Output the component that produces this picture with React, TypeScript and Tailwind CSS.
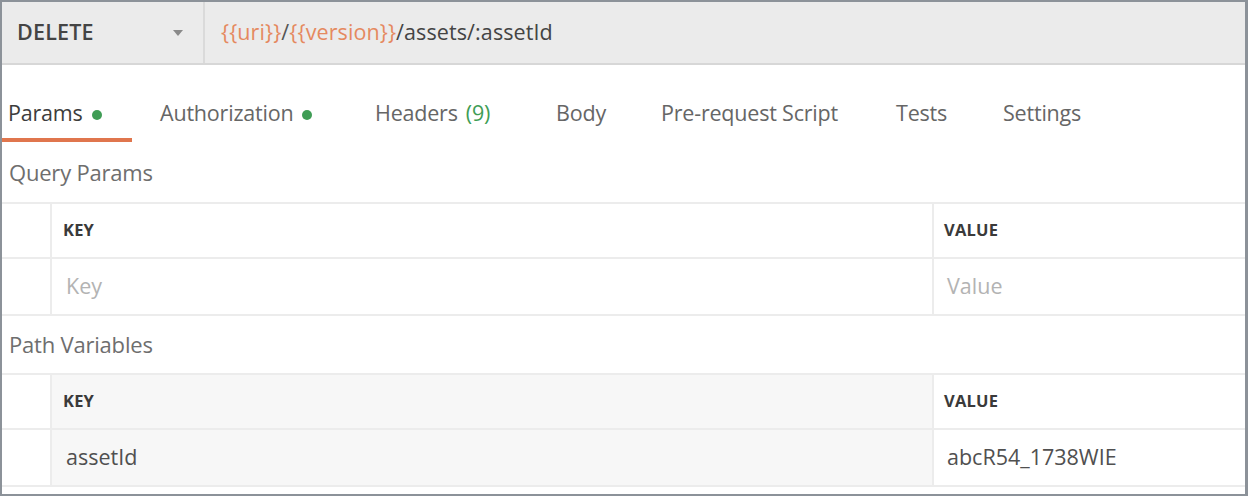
import React from "react";

const font = { fontFamily: '"Open Sans", "Noto Sans", sans-serif' };

function Dot() {
  return <span className="inline-block w-[10px] h-[10px] rounded-full bg-[#3f9d55] ml-[9px] mt-[3px]" />;
}

function Table({ rowKey, rowValue, placeholder, shaded }: { rowKey: string; rowValue: string; placeholder?: boolean; shaded?: boolean }) {
  const keyBg = shaded ? "bg-[#f7f7f7]" : "bg-white";
  const txt = placeholder ? "text-[#b3b3b3]" : "text-[#505050]";
  return (
    <div className="border-t-2 border-b-2 border-[#ececec] shrink-0">
      <div className="flex h-[55px] border-b-2 border-[#ececec]">
        <div className="w-[50px] border-r-2 border-[#ececec] bg-white" />
        <div className={`flex-1 flex items-center pl-[11px] border-r-2 border-[#ececec] ${keyBg}`}>
          <span className="text-[16.5px] font-bold text-[#3a3a3a] tracking-[0.2px]">KEY</span>
        </div>
        <div className="w-[311px] flex items-center pl-[10px] bg-white">
          <span className="text-[16.5px] font-bold text-[#3a3a3a] tracking-[0.2px]">VALUE</span>
        </div>
      </div>
      <div className="flex h-[55px]">
        <div className="w-[50px] border-r-2 border-[#ececec] bg-white" />
        <div className={`flex-1 flex items-center pl-[14px] border-r-2 border-[#ececec] ${keyBg}`}>
          <span className={`text-[21.5px] ${txt}`}>{rowKey}</span>
        </div>
        <div className="w-[311px] flex items-center pl-[13px] bg-white">
          <span className={`text-[21.5px] ${txt}`}>{rowValue}</span>
        </div>
      </div>
    </div>
  );
}

export default function App() {
  return (
    <div style={font} className="w-[1248px] h-[496px] bg-white border-t-[2px] border-l-[2px] border-r-[3px] border-b-[2px] border-[#8c9299] flex flex-col overflow-hidden">
      {/* top bar */}
      <div className="h-[63px] bg-[#ebebeb] border-b-2 border-[#d7d7d7] flex shrink-0">
        <div className="w-[203px] border-r-2 border-[#dadada] flex items-center justify-between pl-[15px] pr-[19px]">
          <span className="text-[21.5px] font-semibold text-[#444] tracking-[0.2px]">DELETE</span>
          <svg width="12" height="8" viewBox="0 0 12 8"><path d="M1 1 L11 1 L6 7 Z" fill="#8a8a8a" /></svg>
        </div>
        <div className="flex items-center pl-[16px] text-[21.5px] tracking-[0.1px]">
          <span className="text-[#e5895f]">{"{{uri}}"}</span>
          <span className="text-[#555]">/</span>
          <span className="text-[#e5895f]">{"{{version}}"}</span>
          <span className="text-[#444]">/assets/:assetId</span>
        </div>
      </div>
      {/* tabs */}
      <div className="h-[78px] flex shrink-0 text-[21.5px] text-[#666] tracking-[-0.2px]">
        <div className="relative w-[130px] flex items-center pl-[6px] h-full pt-[19px]">
          <span className="text-[#3c3c3c]">Params</span>
          <Dot />
          <div className="absolute left-[-2px] w-[132px] bottom-[1px] h-[4px] bg-[#e0764d]" />
        </div>
        <div className="w-[215px] flex items-center pl-[28px] h-full pt-[19px]">
          <span>Authorization</span>
          <Dot />
        </div>
        <div className="w-[181px] flex items-center pl-[28px] h-full pt-[19px]">
          <span>Headers</span>
          <span className="ml-[8px] text-[#3f9d55]">(9)</span>
        </div>
        <div className="w-[106px] flex items-center pl-[28px] h-full pt-[19px]">Body</div>
        <div className="w-[235px] flex items-center pl-[27px] h-full pt-[19px]">Pre-request Script</div>
        <div className="w-[106px] flex items-center pl-[27px] h-full pt-[19px]">Tests</div>
        <div className="flex items-center pl-[28px] h-full pt-[19px]">Settings</div>
      </div>
      {/* query params */}
      <div className="h-[59px] flex items-center pl-[7px] shrink-0">
        <span className="text-[22px] text-[#6e6e6e] tracking-[-0.2px]">Query Params</span>
      </div>
      <Table rowKey="Key" rowValue="Value" placeholder />
      <div className="h-[57px] flex items-center pl-[7px] shrink-0">
        <span className="text-[22px] text-[#6e6e6e] tracking-[-0.2px]">Path Variables</span>
      </div>
      <Table rowKey="assetId" rowValue="abcR54_1738WIE" shaded />
    </div>
  );
}
